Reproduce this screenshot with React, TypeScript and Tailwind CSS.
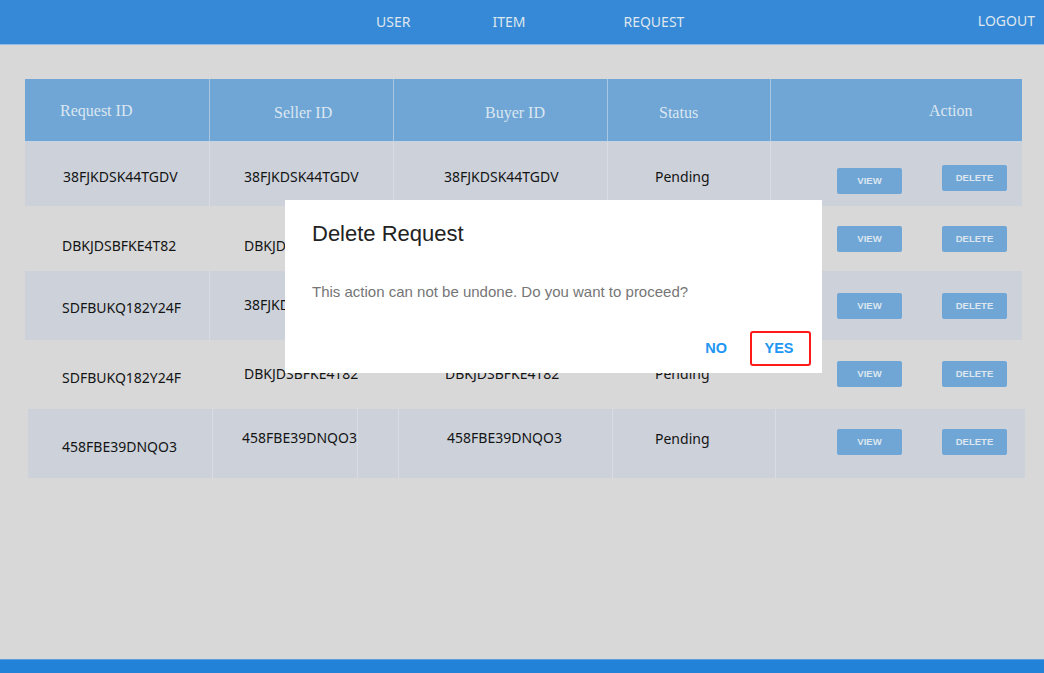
import { FC, ReactNode } from "react";

type Cell = { w: number; pl: number; pt: number; content: ReactNode; line?: boolean };

const body = { fontFamily: '"Noto Sans", "Open Sans", sans-serif' };
const serif = { fontFamily: '"Liberation Serif", "DejaVu Serif", serif' };
const arial = { fontFamily: '"Liberation Sans", Arial, sans-serif' };

const Btn: FC<{ label: string }> = ({ label }) => (
  <div
    style={arial}
    className="w-[65px] h-[26px] rounded-[2px] bg-[#6fa6d6] flex items-center justify-center text-[9.5px] font-bold text-[#dde6ef]"
  >
    {label}
  </div>
);

const Actions: FC<{ viewTop: number; delTop: number }> = ({ viewTop, delTop }) => (
  <div className="flex gap-[40px]">
    <div style={{ marginTop: viewTop }}>
      <Btn label="VIEW" />
    </div>
    <div style={{ marginTop: delTop }}>
      <Btn label="DELETE" />
    </div>
  </div>
);

const Row: FC<{ cells: Cell[]; h: number; shaded?: boolean; ml?: number }> = ({ cells, h, shaded, ml = 0 }) => (
  <div
    className={`flex w-fit ${shaded ? "bg-[#cdd2da]" : ""}`}
    style={{ height: h, marginLeft: ml }}
  >
    {cells.map((c, i) => (
      <div
        key={i}
        style={{ width: c.w, paddingLeft: c.pl, paddingTop: c.pt }}
        className={`shrink-0 h-full text-[14px] leading-[20px] text-[#141414] ${
          c.line ? "border-r border-[#d9dce1]" : ""
        }`}
      >
        {c.content}
      </div>
    ))}
  </div>
);

const Header = () => {
  const cols = [
    { w: 185, pl: 35, pt: 22, t: "Request ID" },
    { w: 184, pl: 64, pt: 24, t: "Seller ID" },
    { w: 214, pl: 91, pt: 24, t: "Buyer ID" },
    { w: 163, pl: 51, pt: 24, t: "Status" },
    { w: 251, pl: 158, pt: 22, t: "Action" },
  ];
  return (
    <div className="flex w-fit h-[63px] bg-[#6fa6d6] border-b border-[#c5d5e6]">
      {cols.map((c, i) => (
        <div
          key={c.t}
          style={{ ...serif, width: c.w, paddingLeft: c.pl, paddingTop: c.pt }}
          className={`shrink-0 text-[16px] leading-[20px] text-[#dce6f0] ${
            i < cols.length - 1 ? "border-r border-[#a9c7e3]" : ""
          }`}
        >
          {c.t}
        </div>
      ))}
    </div>
  );
};

const App = () => {
  return (
    <div style={body} className="relative min-h-[673px] bg-[#d8d8d8] flex flex-col">
      <header className="h-[45px] bg-[#3589d6] border-b border-[#8fbbe6] flex items-start text-[14px] text-[#dfe6ee]">
        <nav className="flex pl-[376px] pt-[11px]">
          <span>USER</span>
          <span className="ml-[82px]">ITEM</span>
          <span className="ml-[98px]">REQUEST</span>
        </nav>
        <span className="ml-auto mr-[9px] pt-[10px]">LOGOUT</span>
      </header>

      <main className="pt-[34px] pl-[25px]">
        <Header />
        <Row
          h={64}
          shaded
          cells={[
            { w: 185, pl: 38, pt: 25, content: "38FJKDSK44TGDV", line: true },
            { w: 184, pl: 34, pt: 25, content: "38FJKDSK44TGDV", line: true },
            { w: 214, pl: 50, pt: 25, content: "38FJKDSK44TGDV", line: true },
            { w: 163, pl: 47, pt: 25, content: "Pending", line: true },
            { w: 251, pl: 66, pt: 0, content: <Actions viewTop={26} delTop={23} /> },
          ]}
        />
        <Row
          h={65}
          cells={[
            { w: 185, pl: 37, pt: 30, content: "DBKJDSBFKE4T82" },
            { w: 184, pl: 34, pt: 30, content: "DBKJDSBFKE4T82" },
            { w: 214, pl: 51, pt: 30, content: "DBKJDSBFKE4T82" },
            { w: 163, pl: 47, pt: 30, content: "Pending" },
            { w: 251, pl: 66, pt: 0, content: <Actions viewTop={20} delTop={20} /> },
          ]}
        />
        <Row
          h={69}
          shaded
          cells={[
            { w: 185, pl: 37, pt: 27, content: "SDFBUKQ182Y24F", line: true },
            { w: 184, pl: 34, pt: 24, content: "38FJKDSK44TGDV", line: true },
            { w: 214, pl: 51, pt: 24, content: "38FJKDSK44TGDV", line: true },
            { w: 163, pl: 47, pt: 24, content: "Pending", line: true },
            { w: 251, pl: 66, pt: 0, content: <Actions viewTop={22} delTop={22} /> },
          ]}
        />
        <Row
          h={69}
          cells={[
            { w: 185, pl: 37, pt: 28, content: "SDFBUKQ182Y24F" },
            { w: 184, pl: 34, pt: 24, content: "DBKJDSBFKE4T82" },
            { w: 214, pl: 51, pt: 24, content: "DBKJDSBFKE4T82" },
            { w: 163, pl: 47, pt: 24, content: "Pending" },
            { w: 251, pl: 66, pt: 0, content: <Actions viewTop={21} delTop={21} /> },
          ]}
        />
        <Row
          h={69}
          shaded
          ml={3}
          cells={[
            { w: 185, pl: 34, pt: 28, content: "458FBE39DNQO3", line: true },
            { w: 145, pl: 29, pt: 19, content: "458FBE39DNQO3", line: true },
            { w: 41, pl: 0, pt: 0, content: null, line: true },
            { w: 214, pl: 48, pt: 19, content: "458FBE39DNQO3", line: true },
            { w: 163, pl: 42, pt: 20, content: "Pending", line: true },
            { w: 249, pl: 61, pt: 0, content: <Actions viewTop={20} delTop={20} /> },
          ]}
        />
      </main>

      <footer className="mt-auto h-[14px] bg-[#2282d8] border-t border-[#5a9fdc]" />

      {/* confirm dialog */}
      <div
        style={arial}
        className="absolute left-[285px] top-[200px] w-[537px] h-[173px] bg-white flex flex-col"
      >
        <h2 className="pl-[27px] pt-[21px] text-[22px] leading-[26px] font-normal text-[#222]">Delete Request</h2>
        <p className="pl-[27px] mt-[35px] text-[15px] leading-[20px] text-[#767676]">
          This action can not be undone. Do you want to proceed?
        </p>
        <div className="flex justify-end items-center pr-[11px] mt-[29px] text-[14.5px] font-bold text-[#2196f3]">
          <span className="mr-[23px]">NO</span>
          <span className="w-[61px] h-[35px] border-2 border-[#ff1a1a] rounded-[3px] flex items-center justify-center pr-[3px]">
            YES
          </span>
        </div>
      </div>
    </div>
  );
};

export default App;
